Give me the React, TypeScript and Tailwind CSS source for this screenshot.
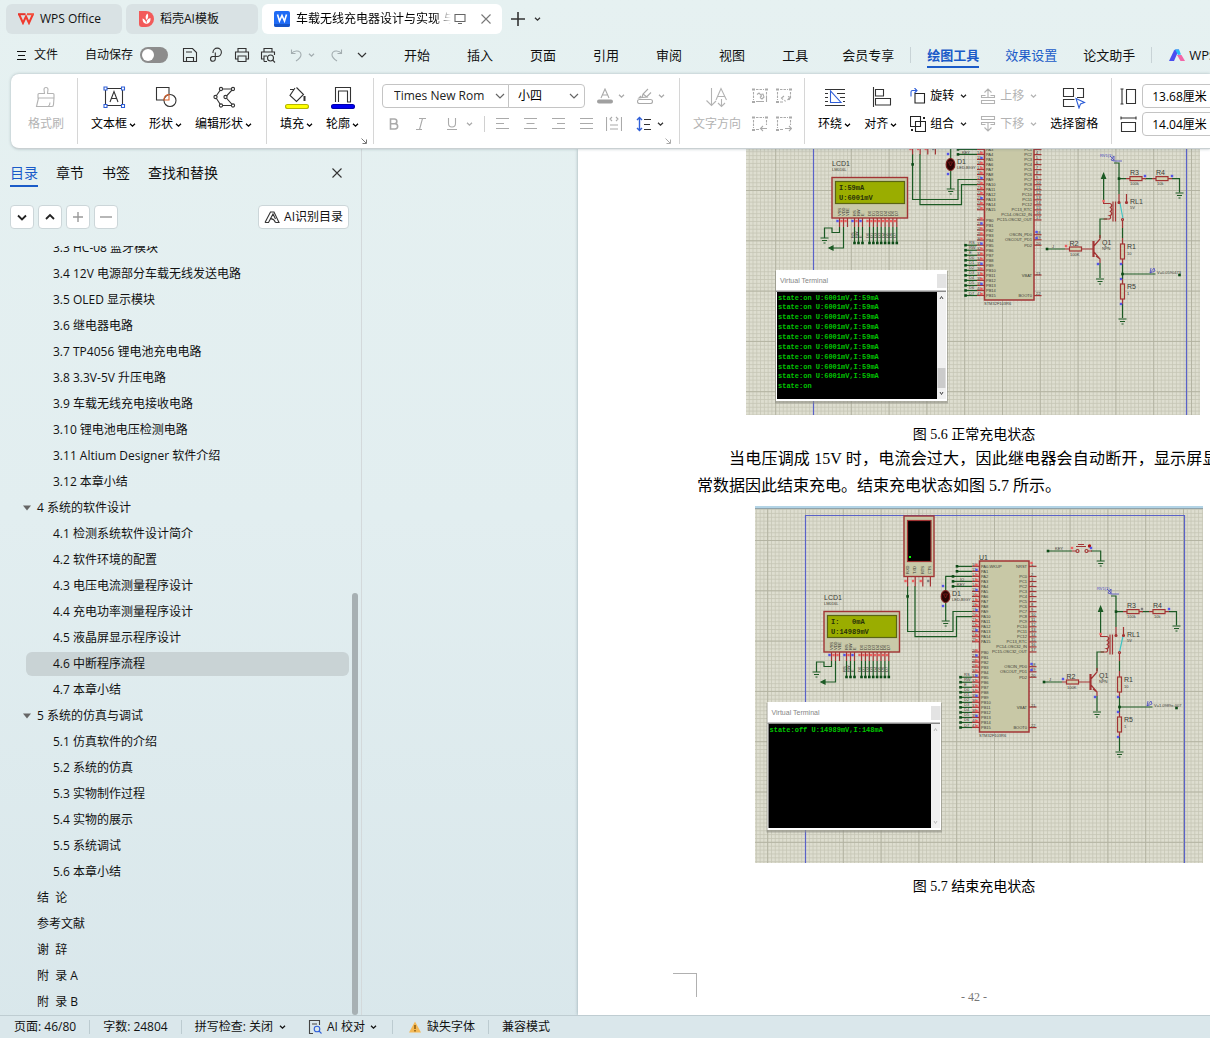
import type { ReactNode } from 'react';
import clsx from 'clsx';

const outline = [
  { level: 2, text: '3.3 HC-08 蓝牙模块' },
  { level: 2, text: '3.4 12V 电源部分车载无线发送电路' },
  { level: 2, text: '3.5 OLED 显示模块' },
  { level: 2, text: '3.6 继电器电路' },
  { level: 2, text: '3.7 TP4056 锂电池充电电路' },
  { level: 2, text: '3.8 3.3V-5V 升压电路' },
  { level: 2, text: '3.9 车载无线充电接收电路' },
  { level: 2, text: '3.10 锂电池电压检测电路' },
  { level: 2, text: '3.11 Altium Designer 软件介绍' },
  { level: 2, text: '3.12 本章小结' },
  { level: 1, text: '4 系统的软件设计', open: true },
  { level: 2, text: '4.1 检测系统软件设计简介' },
  { level: 2, text: '4.2 软件环境的配置' },
  { level: 2, text: '4.3 电压电流测量程序设计' },
  { level: 2, text: '4.4 充电功率测量程序设计' },
  { level: 2, text: '4.5 液晶屏显示程序设计' },
  { level: 2, text: '4.6 中断程序流程', active: true },
  { level: 2, text: '4.7 本章小结' },
  { level: 1, text: '5 系统的仿真与调试', open: true },
  { level: 2, text: '5.1 仿真软件的介绍' },
  { level: 2, text: '5.2 系统的仿真' },
  { level: 2, text: '5.3 实物制作过程' },
  { level: 2, text: '5.4 实物的展示' },
  { level: 2, text: '5.5 系统调试' },
  { level: 2, text: '5.6 本章小结' },
  { level: 1, text: '结  论' },
  { level: 1, text: '参考文献' },
  { level: 1, text: '谢  辞' },
  { level: 1, text: '附  录 A' },
  { level: 1, text: '附  录 B' },
];

/* ---------- icons ---------- */

const Icon = ({ size = 24, className, children }: { size?: number; className?: string; children: ReactNode }) => (
  <svg
    width={size}
    height={size}
    viewBox={`0 0 ${size} ${size}`}
    fill="none"
    stroke="currentColor"
    strokeWidth="1.1"
    className={clsx('shrink-0', className)}
    aria-hidden="true"
  >
    {children}
  </svg>
);

const Chevron = ({ className }: { className?: string }) => (
  <svg width="7" height="6" viewBox="0 0 7 6" fill="none" stroke="currentColor" strokeWidth="1.3" className={clsx('shrink-0', className)} aria-hidden="true">
    <path d="M1 1.7 3.5 4.2 6 1.7" />
  </svg>
);

const WideChevron = ({ className }: { className?: string }) => (
  <svg width="10" height="6" viewBox="0 0 10 6" fill="none" stroke="currentColor" strokeWidth="1.2" className={clsx('shrink-0', className)} aria-hidden="true">
    <path d="M1 1 5 5 9 1" />
  </svg>
);

const Launcher = () => (
  <svg width="6" height="6" viewBox="0 0 6 6" fill="none" stroke="currentColor" strokeWidth="1" aria-hidden="true">
    <path d="M.5.5 5 5M5.5 1.5v4h-4" />
  </svg>
);

const WpsLogo = () => (
  <svg width="16" height="12" viewBox="0 0 16 12" fill="none" strokeWidth="2" aria-hidden="true">
    <path d="M0 1.2h7.5" stroke="#e5342c" />
    <path d="M1.2 1.5 5 10 8 3.5 11 10 14.8 1.5" stroke="#f03a2e" />
    <path d="M9 1.2h7" stroke="#f4523c" />
  </svg>
);

const DocerLogo = () => (
  <svg width="15" height="16" viewBox="0 0 15 16" aria-hidden="true">
    <path d="M0 0h7a8 8 0 0 1 0 16H3a3 3 0 0 1-3-3z" fill="#f25a5a" />
    <path d="M7.5 13C4.5 12.5 3.5 10.5 3.5 7.5 5.5 8 7 9.5 7.5 13zM7.5 13c-.3-3 1-5.5 4-6 .3 3-1 5.5-4 6zM7.5 9C6 6.5 6.5 4 8.5 2.5 9.5 4.5 9.5 7 7.5 9z" fill="#fff" />
  </svg>
);

const WriterLogo = () => (
  <svg width="16" height="16" viewBox="0 0 16 16" aria-hidden="true">
    <rect width="16" height="16" rx="2" fill="#1f6bf5" />
    <path d="M0 13h16v1a2 2 0 0 1-2 2H2a2 2 0 0 1-2-2z" fill="#1553c7" />
    <path d="M3.5 3.5 5.5 10 8 4.5 10.5 10 12.5 3.5" fill="none" stroke="#fff" strokeWidth="1.6" />
  </svg>
);

const AiLogo = () => (
  <svg width="16" height="13" viewBox="0 0 16 13" aria-hidden="true">
    <path d="M0 12 5 1.5Q5.5.5 7 .5h3L5 12z" fill="#4a4df0" />
    <path d="M6 .5h4l2 5-3 .5z" fill="#27b8f5" />
    <path d="M8 6h4.5L16 12h-4.5z" fill="#f266a8" />
  </svg>
);

const IconSave = () => (
  <Icon size={16}>
    <path d="M1.5 14.5v-13h9l4 4v9h-3v-4h-7v4zM4 5h6M4.5 14.5h7" />
  </Icon>
);
const IconExport = () => (
  <Icon size={16}>
    <path d="M5 6V5.2a4.2 4.2 0 1 1 4.2 4.3H4.5a2.4 2.4 0 1 0 2.8 2.500V5.5" />
  </Icon>
);
const IconPrint = () => (
  <Icon size={16}>
    <path d="M4 5V1.5h8V5M3.5 12h-2V5h13v7h-2M4 9h8v5.5H4z" />
  </Icon>
);
const IconPreview = () => (
  <Icon size={16}>
    <path d="M4 5V1.5h8V5M3.5 12h-2V5h13v3M4 14.5V9h3M4 14.5h3" />
    <circle cx="10.5" cy="11" r="3" />
    <path d="m12.7 13.2 2.3 2.3" />
  </Icon>
);
const IconUndo = () => (
  <Icon size={16}>
    <path d="M3.5 2.5v4h4M3.5 6.5C6 3 12.5 3 13 7.5c.2 2.5-2 4.5-5 6.5" />
  </Icon>
);
const IconRedo = () => (
  <Icon size={16}>
    <path d="M12.5 2.5v4h-4M12.5 6.5C10 3 3.5 3 3 7.5c-.2 2.5 2 4.5 5 6.5" />
  </Icon>
);

const IconBrush = () => (
  <Icon>
    <path d="m10.5 8.5-.5-4a2 2 0 0 1 4 0l-.5 4H19q1 0 1 1V13H4V9.5q0-1 1-1zM4.5 13l-2 8.5H18q1.5 0 1.5-2L20 13M14 21.5q2-1 2-4" />
  </Icon>
);
const IconTextBox = () => (
  <Icon>
    <path d="M5 3.5h14M5 20.5h14M3.5 5v14M20.5 5v14" />
    <path d="m8 17 4-10.5L16 17M9.5 13.5h5" />
    <path stroke="#2f5fd8" fill="#fff" d="M2 2h3v3H2zM19.5 2h3v3h-3zM2 19.5h3v3H2zM19.5 19.5h3v3h-3z" />
  </Icon>
);
const IconShapes = () => (
  <Icon>
    <path d="M10 15H2.5V2.5H15V9" />
    <circle cx="16" cy="15.5" r="6" />
    <path stroke="#d9622b" d="M15 9.5V15h-5q0-5 5-5.5z" />
  </Icon>
);
const IconEditShape = () => (
  <Icon>
    <path d="M9 4h12l-7.5 8 7.5 8.5H9L3.5 12z" />
    <g fill="#fff">
      <circle cx="9" cy="4" r="1.6" />
      <circle cx="21" cy="4" r="1.6" />
      <circle cx="13.5" cy="12" r="1.6" />
      <circle cx="3.5" cy="12" r="1.6" />
      <circle cx="9" cy="20.5" r="1.6" />
      <circle cx="21" cy="20.5" r="1.6" />
    </g>
  </Icon>
);
const IconFill = () => (
  <Icon>
    <path d="M5 4.5h4M11.5 2.5l7 7-7 7-6.5-6 5-7.5" />
    <path d="M19.5 11v5" strokeWidth="2" />
    <rect x=".5" y="19.5" width="23" height="4" rx="2" fill="#ffff00" stroke="#b5b500" />
  </Icon>
);
const IconOutline = () => (
  <Icon>
    <path d="M4.5 17V2.5h15V17h-3V6h-9v11" />
    <rect x=".5" y="19.5" width="23" height="4" rx="2" fill="#0000f0" stroke="#0000b0" />
  </Icon>
);
const IconTextDir = () => (
  <Icon>
    <path d="M6.5 3v17.5M1.5 15.5l5 5 4.5-4.5M11 15l5-11.5L21.5 15M13 11.5h6.5M16.5 14v7M13 18l3.5 3.5L20 18" />
  </Icon>
);
const IconWrap = () => (
  <Icon>
    <path d="M2 4.5h20M2 20.5h20M2 8.5h3M2 12.5h3M2 16.5h3M14 8.5h8M17 12.5h5M20 16.5h2" />
    <path stroke="#2f5fd8" d="M7.5 6v11.5H18z" />
  </Icon>
);
const IconAlign = () => (
  <Icon>
    <path d="M4.5 2v20M6.5 4.5h8V11h-8zM6.5 13.5h15V20h-15z" />
  </Icon>
);
const IconPane = () => (
  <Icon>
    <path d="M1.5 3.5h10v8h-10zM15 3.5h6.5v9H15M12.500 14.5h-11v7h11" />
    <path stroke="#2f5fd8" fill="#fff" d="m14 13.5 8.5 4-4 1.5-1.5 4z" />
  </Icon>
);
const IconRotate = () => (
  <Icon size={16}>
    <path d="M5 5.5h9.5V15H5z" />
    <path stroke="#2f5fd8" d="M1 8.5V4q0-1.5 1.5-1.5H7M4.5 0 7 2.5 4.5 5" />
  </Icon>
);
const IconGroup = () => (
  <Icon size={16}>
    <path d="M.5.5h10v10H.5zM5.5 5.5h10v10h-10z" />
    <path d="M13 1h2v2h-2zM1 13h2v2H1z" fill="currentColor" stroke="none" />
  </Icon>
);
const IconForward = () => (
  <Icon size={16}>
    <path d="M1.5 12.5h13v3h-13zM5.5 7.5h-4v2h13v-2h-4M8 9.5V1M4.5 4.5 8 1l3.5 3.5" />
  </Icon>
);
const IconBackward = () => (
  <Icon size={16}>
    <path d="M1.5.5h13v3h-13zM5.5 8.5h-4v-2h13v2h-4M8 6.5V15M4.5 11.5 8 15l3.5-3.5" />
  </Icon>
);

const LinkBox = ({ kind }: { kind: 'link' | 'unlink' | 'prev' | 'next' }) => (
  <Icon size={16}>
    <path d="M1.5 4v8M14.5 4v5M4 1.5h8" strokeDasharray="2.5 1" />
    <path d="M0 .5h3v2H0zM13 .5h3v2h-3zM0 13h3v2H0z" fill="currentColor" stroke="none" />
    {kind === 'link' && <path d="M4 13.5h8M14.5 9v5M5 6.5 7 5l2.5 3L8 9.5M8 6.5l3-.5 1 3-2 2-2-1.5" />}
    {kind === 'unlink' && <path d="M4 14h3M7 11.5 5.5 10 8 8M12 8.5l2.5 1L13 12M8.5 12l1 1.5M11.5 12l2-2" />}
    {kind === 'prev' && <path d="M4 13.5h3M15 12.5H9M11 10l-2.5 2.5L11 15" />}
    {kind === 'next' && <path d="M4 13.5h3M9 12.5h6M13 10l2.5 2.5L13 15" />}
  </Icon>
);

/* ---------- ribbon pieces ---------- */

const Divider = () => <div className="my-1 w-px shrink-0 bg-[#d6d6d6]" />;

const BigButton = ({ icon, label, menu = true, disabled }: { icon: ReactNode; label: string; menu?: boolean; disabled?: boolean }) => (
  <button type="button" disabled={disabled} className={clsx('flex shrink-0 flex-col items-center pt-[11px]', disabled ? 'text-[#b3b3b3]' : 'text-[#333]')}>
    {icon}
    <span className={clsx('mt-[5px] flex h-5 items-center gap-0.5', !disabled && 'text-black')}>
      {label}
      {menu && <Chevron className="mt-0.5" />}
    </span>
  </button>
);

const SmallButton = ({ icon, label, disabled }: { icon: ReactNode; label: string; disabled?: boolean }) => (
  <button type="button" disabled={disabled} className={clsx('flex h-6 items-center', disabled ? 'text-[#b3b3b3]' : 'text-[#222]')}>
    {icon}
    <span className={clsx('mr-1.5 ml-1', !disabled && 'text-black')}>{label}</span>
    <Chevron />
  </button>
);

const alignIcons = [
  { name: '左对齐', d: 'M1 2.5h13M1 7.5h8M1 12.5h13' },
  { name: '居中', d: 'M1 2.5h13M3.5 7.5h8M1 12.5h13' },
  { name: '右对齐', d: 'M1 2.5h13M6 7.5h8M1 12.5h13' },
  { name: '两端对齐', d: 'M1 2.5h13M1 7.5h13M1 12.5h13' },
];

/* ---------- circuit drawing ---------- */

const WIRE = '#1c5a24';
const PART = '#a23434';
const INK = '#3b3b34';

const Ground = ({ x, y }: { x: number; y: number }) => (
  <path d={`M${x - 4} ${y}h8M${x - 2.5} ${y + 2.5}h5M${x - 1} ${y + 5}h2`} stroke={WIRE} />
);

const Dot = ({ x, y }: { x: number; y: number }) => <rect x={x - 1.3} y={y - 1.3} width="2.6" height="2.6" fill="#0c4a16" stroke="none" />;

const Probe = ({ x, y, color = '#5656e8' }: { x: number; y: number; color?: string }) => (
  <rect x={x - 1.2} y={y - 1.2} width="2.4" height="2.4" fill={color} stroke="none" />
);

const Label = ({ x, y, size = 7, end, children }: { x: number; y: number; size?: number; end?: boolean; children: ReactNode }) => (
  <text x={x} y={y} fontSize={size} fill={INK} stroke="none" textAnchor={end ? 'end' : 'start'}>
    {children}
  </text>
);

const Resistor = ({ x, y, vertical }: { x: number; y: number; vertical?: boolean }) => (
  <rect x={x} y={y} width={vertical ? 4 : 12} height={vertical ? 15 : 4} fill="#d0cfb0" stroke={PART} />
);

const Display = ({ lines }: { lines: string[] }) => (
  <g stroke={WIRE}>
    <rect x="824" y="611.5" width="75.5" height="40.5" fill="#c9c9a9" stroke={PART} strokeWidth="1.4" />
    <rect x="827.5" y="615.5" width="69" height="22" fill="#9aad00" stroke="#5a6414" />
    {lines.map((line, i) => (
      <text key={i} x="831" y={624 + i * 10} fontSize="7" fontWeight="bold" fill="#28300a" stroke="none" xmlSpace="preserve" className="font-['Liberation_Mono',monospace] whitespace-pre">
        {line}
      </text>
    ))}
    {['VSS', 'VDD', 'VEE', 'RS', 'RW', 'E', 'D0', 'D1', 'D2', 'D3', 'D4', 'D5', 'D6', 'D7'].map((pin, i) => {
      const x = i < 3 ? 831.5 + i * 4 : i < 6 ? 846.5 + (i - 3) * 4 : 861.5 + (i - 6) * 3.9;
      return (
        <g key={pin}>
          <text transform={`translate(${x + 1.5} 650) rotate(-90)`} fontSize="4" fill={INK} stroke="none">
            {pin}
          </text>
          <path d={`M${x} 652v9`} stroke={PART} />
          <Probe x={x - 2} y={655} color={i === 0 || i === 3 || i === 5 ? '#5656e8' : '#f06060'} />
          {i > 2 && <path d={`M${x} 661v16`} />}
          {i > 2 && <Dot x={x} y={677} />}
          {i > 2 && (
            <text transform={`translate(${x - 0.5} 672) rotate(-90)`} fontSize="4" fill={INK} stroke="none">
              {pin}
            </text>
          )}
        </g>
      );
    })}
    <path d="M831.5 661v5.5H824V662h-7.5v10M835.5 661v21H824" />
    <path d="m821 682 4-2v4z" fill={WIRE} />
    <Ground x={816.5} y={672} />
    <Label x={824} y={600}>LCD1</Label>
    <Label x={824} y={605} size={4}>LM016L</Label>
  </g>
);

const leftPins = [
  ...Array.from({ length: 16 }, (_, i) => ({ name: i === 0 ? 'PA0-WKUP' : `PA${i}`, y: 566.3 + i * 5.03 })),
  ...Array.from({ length: 16 }, (_, i) => ({ name: `PB${i}`, y: 652 + i * 5.03 })),
];

const rightPins = [
  { name: 'NRST', y: 566.3 },
  ...Array.from({ length: 16 }, (_, i) => ({
    name: ['PC13_RTC', 'PC14-OSC32_IN', 'PC15-OSC32_OUT'][i - 13] ?? `PC${i}`,
    y: 576.5 + i * 5.03,
  })),
  { name: 'OSCIN_PD0', y: 666.7 },
  { name: 'OSCOUT_PD1', y: 671.8 },
  { name: 'PD2', y: 677.2 },
  { name: 'VBAT', y: 707 },
  { name: 'BOOT0', y: 727.6 },
];

const busNames = ['RS', 'RW', 'E', 'D0', 'D1', 'D2', 'D3', 'D4', 'D5', 'D6', 'D7'];

const Mcu = () => (
  <g stroke={WIRE}>
    <rect x="979.5" y="561" width="49.5" height="171" fill="#c8c8a6" stroke={PART} strokeWidth="1.5" />
    {leftPins.map((pin, i) => (
      <g key={pin.name}>
        <path d={`M972 ${pin.y}h7.5`} stroke={PART} />
        <Label x={981} y={pin.y + 1.5} size={4}>{pin.name}</Label>
        <Label x={972} y={pin.y - 0.5} size={4}>{10 + i}</Label>
        <Probe x={976.5} y={pin.y - 1.5} color={i % 4 === 1 ? '#5656e8' : '#f06060'} />
      </g>
    ))}
    {rightPins.map((pin, i) => (
      <g key={pin.name}>
        <path d={`M1029 ${pin.y}h7.5`} stroke={PART} />
        <Label x={1027} y={pin.y + 1.5} size={4} end>{pin.name}</Label>
        <Label x={1031} y={pin.y - 0.5} size={4}>{i + 1}</Label>
      </g>
    ))}
    <Probe x={1031.5} y={563} color="#f06060" />
    <Probe x={1031.5} y={664} />
    <Probe x={1031.5} y={670} />
    {busNames.map((name, i) => (
      <g key={name}>
        <path d={`M961 ${677.2 + i * 5.03}h11`} />
        <Dot x={960.5} y={677.2 + i * 5.03} />
        <Label x={964} y={676.2 + i * 5.03} size={4}>{name}</Label>
      </g>
    ))}
    <path d="M957 566.3h15M957 571.3h15M953 581.4h19M953 586.4h19M945.7 590v-13.6H972M945.7 603v18" />
    <Dot x={957} y={566.3} />
    <Dot x={957} y={571.3} />
    <Dot x={953} y={576.4} />
    <Dot x={953} y={581.4} />
    <Dot x={953} y={586.4} />
    <path d="M907.6 586v45.5H953v-20h19M915 586v50.7h41.5v-20H972" />
    <Dot x={907.6} y={596.4} />
    <ellipse cx="945.5" cy="596.5" rx="4.3" ry="6" fill="#2a0505" stroke="#7a1c1c" />
    <path d="M943.5 594h4l-2 4z" stroke="#a02020" strokeWidth=".6" />
    <Probe x={943} y={586} />
    <Probe x={943} y={606} />
    <Ground x={945.7} y={621} />
    <Label x={952} y={596}>D1</Label>
    <Label x={952} y={601} size={4}>LED-BIGY</Label>
    <Label x={960} y={580.5} size={4}>IO</Label>
    <Label x={957} y={585.5} size={4}>KEY</Label>
    <Label x={979} y={560}>U1</Label>
    <Label x={979} y={737} size={4}>STM32F103R6</Label>
    {/* serial terminal block */}
    <rect x="904" y="516" width="30" height="60.5" fill="#c9c9a9" stroke={PART} strokeWidth="1.4" />
    <rect x="907.5" y="520.5" width="23.5" height="41" fill="#000" stroke={PART} />
    <rect x="909" y="556" width="2" height="2" fill="#0f0" stroke="none" />
    {['RXD', 'TXD', 'RTS', 'CTS'].map((pin, i) => (
      <g key={pin}>
        <path d={`M${907.6 + i * 7.6} 576.5v10`} stroke={PART} />
        <Probe x={905.5 + i * 7.6} y={581} color={i < 3 ? '#f06060' : '#808080'} />
        <text transform={`translate(${909 + i * 7.4} 574) rotate(-90)`} fontSize="4" fill={INK} stroke="none">
          {pin}
        </text>
      </g>
    ))}
  </g>
);

const PushButton = () => (
  <g stroke={WIRE}>
    <path d="M1048 551h24M1091 551h9.7v10" />
    <Dot x={1048} y={551} />
    <path d="M1072 551h4M1088 551h4M1076 546.5h10M1078 544.5h6" stroke={PART} />
    <circle cx="1077.5" cy="551" r="1.5" stroke={PART} />
    <circle cx="1086.5" cy="551" r="1.5" stroke={PART} />
    <circle cx="1089.5" cy="546" r="1.7" fill="#b01515" stroke="none" />
    <Probe x={1072} y={548} color="#f06060" />
    <Probe x={1091} y={548} />
    <Label x={1055} y={550} size={4}>KEY</Label>
    <Ground x={1100.7} y={561} />
  </g>
);

const PowerStage = ({ closed, reading }: { closed: boolean; reading: string }) => (
  <g stroke={WIRE}>
    {/* divider on the supply rail */}
    <path d="M1111 596h5v31M1116 611.6h7M1142 611.6h7M1169 611.6h7.5v14" />
    <path d="m1107 589 4 4M1108 593l3-4v5zM1111 594h8" stroke="#4a4ac0" strokeWidth=".8" />
    <text x="1097" y="590" fontSize="4" fill="#4a4ac0" stroke="none">RV1(1)</text>
    <Dot x={1116} y={611.6} />
    <path d="M1123 611.6h4M1139 611.6h4M1149 611.6h4M1165 611.6h4" stroke={PART} />
    <Resistor x={1127} y={609.6} />
    <Resistor x={1153} y={609.6} />
    <Probe x={1169} y={609} />
    <Probe x={1142} y={609} color={closed ? '#5656e8' : '#808080'} />
    <Label x={1127} y={608}>R3</Label>
    <Label x={1153} y={608}>R4</Label>
    <Label x={1127} y={618} size={4}>100k</Label>
    <Label x={1154} y={618} size={4}>10k</Label>
    <Ground x={1176.5} y={626} />

    {/* relay */}
    <path d="M1100.6 611v22M1097 671v-19h7" />
    <path d="m1100.6 606.5-2 5h4z" fill={WIRE} />
    <path d="M1100.6 634v2.5h6a2 2 0 0 1 0 4 2 2 0 0 1 0 4 2 2 0 0 1 0 4 2 2 0 0 1 0 3.5h-6M1110 634.5v20M1112.5 634.5v20M1116 627v9M1123.5 627v9" stroke={PART} />
    <path d={closed ? 'M1117 636l3 16' : 'M1123 636l-3.5 16'} stroke="#3fc4c4" />
    <circle cx="1116" cy="635.5" r="1" fill={PART} stroke={PART} />
    <circle cx="1123.5" cy="635.5" r="1" fill={PART} stroke={PART} />
    <circle cx="1119.5" cy="652.5" r="1" stroke={PART} />
    <Probe x={1100.6} y={634} color="#f06060" />
    <Label x={1127} y={637}>RL1</Label>
    <Label x={1127} y={642} size={4}>5V</Label>

    {/* sense chain */}
    <path d="M1119.5 653v8M1119.5 671v6M1119.5 692v5M1119.5 712v5M1119.5 732v5" stroke={PART} />
    <path d="M1119.5 661v10M1119.5 697v15M1119.5 737v14M1119.5 707h33" />
    <Resistor x={1117.5} y={677} vertical />
    <Resistor x={1117.5} y={717} vertical />
    <Dot x={1119.5} y={707} />
    <Dot x={1176.5} y={708} />
    <Probe x={1118} y={697} />
    <Probe x={1118} y={712} />
    <Probe x={1118} y={737} />
    <path d="m1147 706 4-5 1 3zM1147 706l1-5" stroke="#4a4ac0" strokeWidth=".8" />
    <Label x={1154} y={706.5} size={4}>{reading}</Label>
    <Label x={1124} y={682}>R1</Label>
    <Label x={1124} y={688} size={4}>10</Label>
    <Label x={1124} y={722}>R5</Label>
    <Label x={1124} y={728} size={4}>1</Label>
    <Ground x={1119.5} y={752} />

    {/* driver transistor */}
    <path d="M1044 682h18M1097 696v15" />
    <Dot x={1044} y={682} />
    <path d="M1062 682h4.5M1078.5 682h11M1090 674v16M1091 674v16M1091 679l6-7v-4M1091 685l6 7v4M1093 689l4 3" stroke={PART} />
    <Resistor x={1066.5} y={680} />
    <Probe x={1063} y={679} color={closed ? '#f06060' : '#5656e8'} />
    <Probe x={1095} y={697} />
    <Label x={1066.5} y={679}>R2</Label>
    <Label x={1067} y={689} size={4}>100K</Label>
    <Label x={1049} y={681} size={4}>J</Label>
    <Label x={1099} y={678}>Q1</Label>
    <Label x={1099} y={683} size={4}>NPN</Label>
    <Ground x={1097} y={712} />
  </g>
);

const TerminalWindow = ({ x, y, width, height, lines, thumb }: { x: number; y: number; width: number; height: number; lines: string[]; thumb?: boolean }) => (
  <g>
    <rect x={x - 1} y={y + 1} width={width + 2} height={height + 1.5} fill="#8d8d84" opacity=".6" />
    <rect x={x} y={y} width={width} height={height} fill="#fff" />
    <rect x={x + width - 10} y={y + 4} width="9.5" height="14" fill="#e3e3e3" />
    <text x={x + 4} y={y + 13} fontSize="7" fill="#858585">
      Virtual Terminal
    </text>
    <rect x={x} y={y + 20.5} width={width - 1} height="1.5" fill="#8a8a8a" />
    <rect x={x + 1} y={y + 22} width={width - 11} height={height - 24} fill="#000" />
    <rect x={x + width - 10} y={y + 22} width="9" height={height - 24} fill="#f0f0f0" />
    {thumb && <rect x={x + width - 9.5} y={y + 98} width="8" height="20" fill="#cbcbcb" />}
    <path d={`M${x + width - 7} ${y + 29}l1.5-2.5 1.5 2.5M${x + width - 7} ${y + height - 9}l1.5 2.5 1.5-2.5`} fill="none" stroke={thumb ? '#444' : '#bbb'} strokeWidth="1" />
    {lines.map((line, i) => (
      <text key={i} x={x + 2} y={y + 29.5 + i * 9.87} fontSize="7" fontWeight="bold" fill="#00c400" className="font-['Liberation_Mono',monospace]">
        {line}
      </text>
    ))}
  </g>
);

const Grid = ({ id, x, y, width, height }: { id: string; x: number; y: number; width: number; height: number }) => (
  <>
    <defs>
      <pattern id={`${id}-minor`} x={x} y={y} width="3.78" height="3.87" patternUnits="userSpaceOnUse">
        <path d="M0 .5h4M.5 0v4" stroke="#c6c6b4" strokeWidth=".8" />
      </pattern>
      <pattern id={`${id}-major`} x={x} y={y} width="37.8" height="50.3" patternUnits="userSpaceOnUse">
        <path d="M0 .5h38M.5 0v51" stroke="#b2b2a0" strokeWidth=".9" />
      </pattern>
    </defs>
    <rect x={x - 100} y={y - 100} width={width} height={height} fill="#deded0" />
    <rect x={x - 100} y={y - 100} width={width} height={height} fill={`url(#${id}-minor)`} />
    <rect x={x - 100} y={y - 100} width={width} height={height} fill={`url(#${id}-major)`} />
  </>
);

const chargingLog = [...Array(9).fill('state:on U:6001mV,I:59mA'), 'state:on'];

const ChargingFigure = () => (
  <svg width="454" height="266" viewBox="746 149 454 266" fill="none" strokeWidth="1.2" role="img" aria-label="正常充电状态" className="block font-['Liberation_Sans',sans-serif]">
    <Grid id="charging" x={813} y={190} width={600} height={400} />
    <path d="M813.5 149v266M1186.5 149v266" stroke="#5a62c8" />
    <g transform="translate(8 -434)">
      <Display lines={['I:59mA', 'U:6001mV']} />
    </g>
    <g transform="translate(5 -432)">
      <Mcu />
    </g>
    <g transform="translate(3 -433)">
      <PowerStage closed reading="V=0.0590473" />
    </g>
    <TerminalWindow x={776} y={270} width={171} height={131} lines={chargingLog} thumb />
  </svg>
);

const StoppedFigure = () => (
  <svg width="448" height="357" viewBox="755 506 448 357" fill="none" strokeWidth="1.2" role="img" aria-label="结束充电状态" className="block font-['Liberation_Sans',sans-serif]">
    <Grid id="stopped" x={805} y={540} width={600} height={500} />
    <rect x="755" y="506" width="448" height="2" fill="#b3d4e6" />
    <path d="M755 508.5h448" stroke="#8fa3ab" />
    <path d="M805.5 863V515.5h379V863" stroke="#5a62c8" />
    <Display lines={['I:   0mA', 'U:14989mV']} />
    <Mcu />
    <PushButton />
    <PowerStage closed={false} reading="V=1.0989e-007" />
    <TerminalWindow x={767.5} y={702} width={173.5} height={128} lines={['state:off U:14989mV,I:148mA']} />
  </svg>
);

/* ---------- layout ---------- */

const TitleTabs = () => (
  <div className="flex h-[38px] shrink-0 items-center pl-1.5">
    <button type="button" className="flex h-[30px] w-[116px] items-center gap-1.5 rounded-md bg-[#d9e2e4] pl-3">
      <WpsLogo />
      WPS Office
    </button>
    <button type="button" className="ml-1 flex h-[30px] w-[132px] items-center gap-1.5 rounded-md bg-[#d9e2e4] pl-[13px]">
      <DocerLogo />
      稻壳AI模板
    </button>
    <div className="ml-1 flex h-[30px] w-60 items-center rounded-md bg-white pl-3">
      <WriterLogo />
      <span className="ml-1.5 w-[155px] overflow-hidden bg-linear-to-r from-black from-90% to-transparent bg-clip-text whitespace-nowrap text-transparent">
        车载无线充电器设计与实现 与
      </span>
      <Icon size={12} className="ml-[3px] text-[#666]">
        <path d="M1 1.5h10v7H1zM4 10.5h4" />
      </Icon>
      <button type="button" aria-label="关闭标签" className="ml-[15px] text-[#777]">
        <Icon size={10}>
          <path d="m.5.5 9 9m0-9-9 9" />
        </Icon>
      </button>
    </div>
    <button type="button" aria-label="新建标签" className="ml-[9px] text-[#333]">
      <Icon size={14}>
        <path d="M7 0v14M0 7h14" strokeWidth="1.6" />
      </Icon>
    </button>
    <button type="button" aria-label="标签列表" className="ml-[9px] text-[#333]">
      <Chevron />
    </button>
  </div>
);

const menuTabs = ['开始', '插入', '页面', '引用', '审阅', '视图', '工具'];

const MenuBar = () => (
  <div className="flex h-9 shrink-0 items-center overflow-hidden pb-0.5 pl-[17px] whitespace-nowrap">
    <button type="button" className="flex items-center gap-2">
      <Icon size={9}>
        <path d="M0 .5h9M1 4.5h7M0 8.5h9" />
      </Icon>
      文件
    </button>
    <div className="ml-3 h-4 w-px bg-[#c8d3d6]" />
    <label className="ml-[15px] flex items-center gap-[7px]">
      自动保存
      <input
        type="checkbox"
        role="switch"
        className="h-4 w-7 appearance-none rounded-full bg-[#8c8c8c] p-0.5 before:block before:size-3 before:rounded-full before:bg-white"
      />
    </label>
    <div className="ml-3.5 flex items-center gap-2.5 text-[#333]">
      <button type="button" aria-label="保存"><IconSave /></button>
      <button type="button" aria-label="输出为PDF"><IconExport /></button>
      <button type="button" aria-label="打印"><IconPrint /></button>
      <button type="button" aria-label="打印预览"><IconPreview /></button>
      <button type="button" aria-label="撤销" className="ml-0.5 flex items-center gap-1 text-[#a3adb0]">
        <IconUndo />
        <Chevron />
      </button>
      <button type="button" aria-label="恢复" className="ml-1 text-[#a3adb0]"><IconRedo /></button>
      <button type="button" aria-label="自定义快速访问工具栏" className="ml-0.5"><WideChevron /></button>
    </div>
    <div className="ml-4 h-4 w-px bg-[#c8d3d6]" />
    <nav className="flex items-center text-[13px]">
      <div className="ml-[21px] flex gap-[37px]">
        {menuTabs.map((tab) => (
          <button key={tab} type="button">{tab}</button>
        ))}
      </div>
      <button type="button" className="ml-[34px]">会员专享</button>
      <div className="ml-4 h-4 w-px bg-[#c8d3d6]" />
      <button type="button" className="mt-[5px] ml-4 border-b-2 border-[#1a5bc8] pb-[3px] font-bold text-[#1a5bc8]">绘图工具</button>
      <button type="button" className="ml-[26px] text-[#1a5bc8]">效果设置</button>
      <button type="button" className="ml-[26px]">论文助手</button>
      <div className="ml-4 h-4 w-px bg-[#c8d3d6]" />
      <button type="button" className="ml-[17px] flex items-center gap-1">
        <AiLogo />
        WPS AI
      </button>
    </nav>
  </div>
);

const FontGroup = () => (
  <div className="relative flex w-[305px] shrink-0 flex-col gap-1 pt-2.5 pl-2 text-[#aaa]">
    <div className="flex h-6 items-center">
      <div className="relative w-[127px]">
        <select aria-label="字体" className="h-6 w-full appearance-none rounded-l border border-[#c4c4c4] pr-[22px] pl-[11px] text-[#222]">
          <option>Times New Rom</option>
        </select>
        <WideChevron className="absolute top-[9px] right-1 text-[#666]" />
      </div>
      <div className="relative -ml-px w-[77px]">
        <select aria-label="字号" className="h-6 w-full appearance-none rounded-r border border-[#c4c4c4] pl-[9px] text-black">
          <option>小四</option>
        </select>
        <WideChevron className="absolute top-[9px] right-1.5 text-[#666]" />
      </div>
      <button type="button" disabled aria-label="字体颜色" className="ml-3 flex items-center gap-[5px]">
        <Icon size={16}>
          <path d="M4 10 8 1l4 9M5.5 7h5" />
          <rect y="11.5" width="16" height="4" rx="2" fill="#a0a0a0" stroke="none" />
        </Icon>
        <Chevron />
      </button>
      <button type="button" disabled aria-label="突出显示" className="ml-3 flex items-center gap-[5px]">
        <Icon size={16}>
          <path d="M5 9.5 6 6l5-5M9.5 9 14 4.5M6 6l4 3-5 .5-3 .5 2-2" />
          <rect x=".5" y="11.5" width="15" height="4" rx="2" />
        </Icon>
        <Chevron />
      </button>
    </div>
    <div className="flex h-6 items-center">
      <button type="button" disabled aria-label="加粗" className="flex w-6 justify-center">
        <Icon size={12}>
          <path d="M2.5 1h4a2.3 2.3 0 0 1 0 4.7h-4zM2.5 5.7H7a2.6 2.6 0 0 1 0 5.3H2.5z" strokeWidth="1.6" />
        </Icon>
      </button>
      <button type="button" disabled aria-label="倾斜" className="flex w-[30px] justify-center">
        <Icon size={12}><path d="M4 .5h7M1 11.5h6M7.5.5l-3 11" /></Icon>
      </button>
      <button type="button" disabled aria-label="下划线" className="flex w-[37px] items-center justify-end gap-2">
        <Icon size={12}><path d="M2.5 0v5.5a3.5 3.5 0 0 0 7 0V0M1 11.5h10" /></Icon>
        <Chevron />
      </button>
      <div className="ml-[11px] h-4 w-px bg-[#d0d0d0]" />
      <div className="flex pl-[3px]">
        {alignIcons.map((icon) => (
          <button key={icon.name} type="button" disabled aria-label={icon.name} className="flex w-7 justify-center">
            <Icon size={15}><path d={icon.d} /></Icon>
          </button>
        ))}
        <button type="button" disabled aria-label="分散对齐" className="flex w-7 justify-center">
          <Icon size={16}><path d="M.5 1v14M15.5 1v14M6 1 4 3l2 2M10 1l2 2-2 2M4 9h8M4 13h8" /></Icon>
        </button>
      </div>
      <button type="button" aria-label="行距" className="ml-2 flex items-center gap-[5px] text-[#333]">
        <Icon size={16}>
          <path d="M8 3.5h7M8 8.5h6M8 13.5h7" />
          <path stroke="#2f5fd8" strokeWidth="1.4" d="M3.5 1.5v13M1 4l2.5-2.5L6 4M1 12l2.5 2.5L6 12" />
        </Icon>
        <Chevron />
      </button>
    </div>
    <button type="button" disabled aria-label="字体设置" className="absolute right-2 bottom-1">
      <Launcher />
    </button>
  </div>
);

const Ribbon = () => (
  <div className="z-10 ml-[11px] flex h-[75px] shrink-0 overflow-hidden rounded-l-lg border-b border-[#c9d0d2] bg-white whitespace-nowrap shadow-[0_0_3px_rgba(90,110,120,0.45)]">
    <div className="flex shrink-0 pr-[13px] pl-[17px]">
      <BigButton icon={<IconBrush />} label="格式刷" menu={false} disabled />
    </div>
    <Divider />
    <div className="flex shrink-0 gap-[13px] pr-3.5 pl-[13px]">
      <BigButton icon={<IconTextBox />} label="文本框" />
      <BigButton icon={<IconShapes />} label="形状" />
      <BigButton icon={<IconEditShape />} label="编辑形状" />
    </div>
    <Divider />
    <div className="relative flex shrink-0 gap-[13px] pr-3.5 pl-[13px]">
      <BigButton icon={<IconFill />} label="填充" />
      <BigButton icon={<IconOutline />} label="轮廓" />
      <button type="button" aria-label="形状格式" className="absolute right-1.5 bottom-1 text-[#777]">
        <Launcher />
      </button>
    </div>
    <Divider />
    <FontGroup />
    <Divider />
    <div className="flex shrink-0 gap-[11px] pr-3 pl-[13px]">
      <BigButton icon={<IconTextDir />} label="文字方向" menu={false} disabled />
      <div className="grid w-10 shrink-0 grid-cols-2 content-start gap-x-2 gap-y-3 pt-3.5 text-[#aaa]">
        <button type="button" disabled aria-label="创建文本框链接"><LinkBox kind="link" /></button>
        <button type="button" disabled aria-label="断开文本框链接"><LinkBox kind="unlink" /></button>
        <button type="button" disabled aria-label="前一文本框"><LinkBox kind="prev" /></button>
        <button type="button" disabled aria-label="下一文本框"><LinkBox kind="next" /></button>
      </div>
    </div>
    <Divider />
    <div className="flex shrink-0 gap-[13px] px-[13px]">
      <BigButton icon={<IconWrap />} label="环绕" />
      <BigButton icon={<IconAlign />} label="对齐" />
      <div className="flex flex-col gap-1 pt-2.5">
        <SmallButton icon={<IconRotate />} label="旋转" />
        <SmallButton icon={<IconGroup />} label="组合" />
      </div>
      <div className="flex flex-col gap-1 pt-2.5">
        <SmallButton icon={<IconForward />} label="上移" disabled />
        <SmallButton icon={<IconBackward />} label="下移" disabled />
      </div>
      <BigButton icon={<IconPane />} label="选择窗格" menu={false} />
    </div>
    <Divider />
    <div className="flex shrink-0 flex-col gap-1 pt-2.5 pl-2 text-[#333]">
      <label className="flex items-center gap-[5px]">
        <Icon size={17}><path d="M.5 1h3M.5 16h3M2 1v15M6.5 1.5h9v14h-9z" /></Icon>
        <input aria-label="高度" defaultValue="13.68厘米" className="h-6 w-24 rounded border border-[#c4c4c4] pl-[9px] text-black" />
      </label>
      <label className="flex items-center gap-[5px]">
        <Icon size={17}><path d="M1 .5v3M16 .5v3M1 2h15M1.5 6.5h14v9h-14z" /></Icon>
        <input aria-label="宽度" defaultValue="14.04厘米" className="h-6 w-24 rounded border border-[#c4c4c4] pl-[9px] text-black" />
      </label>
    </div>
  </div>
);

const treeButtons = [
  { name: '展开', d: 'm2 4.5 4 4 4-4', strong: true },
  { name: '收起', d: 'm2 8 4-4 4 4', strong: true },
  { name: '增加', d: 'M6 1v10M1 6h10' },
  { name: '减少', d: 'M0 6h12' },
];

const Sidebar = () => (
  <aside className="relative flex w-[362px] shrink-0 flex-col border-r border-[#d3d9db]">
    <div className="mt-3 flex h-7 items-start gap-[18px] pl-2.5 text-[14px] leading-6">
      <button type="button" className="h-[26px] border-b-2 border-[#1a5bc8] text-[#1a5bc8]">目录</button>
      <button type="button">章节</button>
      <button type="button">书签</button>
      <button type="button">查找和替换</button>
      <button type="button" aria-label="关闭" className="mt-[7px] mr-[19px] ml-auto text-[#333]">
        <Icon size={10}>
          <path d="m.5.5 9 9m0-9-9 9" />
        </Icon>
      </button>
    </div>
    <div className="mt-4 flex gap-1 pr-3 pl-2.5">
      {treeButtons.map((button) => (
        <button
          key={button.name}
          type="button"
          aria-label={button.name}
          className={clsx('flex size-6 items-center justify-center rounded border border-[#ccd6d9] bg-white', button.strong ? 'text-[#222]' : 'text-[#999]')}
        >
          <Icon size={12}>
            <path d={button.d} strokeWidth={button.strong ? 1.8 : 1.4} />
          </Icon>
        </button>
      ))}
      <button type="button" className="ml-auto flex h-6 items-center gap-1 rounded border border-[#ccd6d9] bg-white px-[5px]">
        <Icon size={16} className="text-[#333]">
          <path d="M1 13.5h3.5L9 5l2.5 5M1 13.5 6.5 3H10l5 10.5h-3.5M6.5 10q3-1 5 3.5" />
        </Icon>
        AI识别目录
      </button>
    </div>
    <div className="mt-[17px] min-h-0 flex-1 overflow-hidden">
      <ul className="-mt-2.5">
        {outline.map((item) => (
          <li key={item.text} className="h-[26px] pr-3 pl-[26px]">
            <a
              href="#"
              className={clsx(
                'relative flex h-6 items-center rounded-md whitespace-pre',
                item.level === 1 ? 'pl-[11px]' : 'pl-[27px]',
                item.active && 'bg-[#c9d3d5]',
              )}
            >
              {item.open && (
                <svg width="8" height="6" viewBox="0 0 8 6" className="absolute -left-[3px]" aria-hidden="true">
                  <path d="M0 .5h8L4 5.5z" fill="#666" />
                </svg>
              )}
              {item.text}
            </a>
          </li>
        ))}
      </ul>
    </div>
    <div className="absolute right-[3px] bottom-0 h-[422px] w-1.5 rounded-full bg-[#a7b0b3]" />
  </aside>
);

const Document = () => (
  <main className="min-w-0 flex-1 overflow-hidden pl-[216px] font-['Liberation_Serif','Noto_Sans_CJK_SC',serif]">
    <article className="flex h-full w-[792px] flex-col bg-white pr-[119px] pl-[119px] text-black shadow-[0_0_3px_rgba(80,100,110,0.5)]">
      <div className="ml-[49px]">
        <ChargingFigure />
      </div>
      <p className="mt-1.5 text-center text-[14px] leading-[27px]">图 5.6 正常充电状态</p>
      <p className="-mt-[3px] text-justify indent-8 text-[16px] leading-[27px]">
        当电压调成 15V 时，电流会过大，因此继电器会自动断开，显示屏显示异常数据因此结束充电。结束充电状态如图 5.7 所示。
      </p>
      <div className="mt-[7px] ml-[58px]">
        <StoppedFigure />
      </div>
      <p className="mt-2.5 text-center text-[14px] leading-[27px]">图 5.7 结束充电状态</p>
      <footer className="mt-auto -ml-6 flex h-[42px]">
        <div className="size-6 border-t border-r border-[#b0b0b0]" />
        <span className="flex-1 pt-4 text-center text-[12px] leading-4 text-[#777]">- 42 -</span>
      </footer>
    </article>
  </main>
);

const StatusDivider = () => <div className="mx-[13px] h-3.5 w-px bg-[#bccbd0]" />;

const StatusBar = () => (
  <footer className="flex h-[23px] shrink-0 items-center border-t border-[#bfcdd2] bg-[#dae7eb] pl-3.5 whitespace-nowrap">
    <span>页面: 46/80</span>
    <StatusDivider />
    <span>字数: 24804</span>
    <StatusDivider />
    <button type="button" className="flex items-center gap-1.5">
      拼写检查: 关闭
      <Chevron />
    </button>
    <button type="button" className="ml-[22px] flex items-center gap-[5px]">
      <Icon size={14} className="text-[#444]">
        <path d="M5 13.5H1.5V.5h10V5M4 4h5" />
        <g stroke="#2f5fd8">
          <circle cx="9" cy="9" r="2.8" />
          <path d="m11 11 2.5 2.5" />
        </g>
      </Icon>
      AI 校对
      <Chevron />
    </button>
    <div className="ml-[15px] h-3.5 w-px bg-[#bccbd0]" />
    <button type="button" className="ml-4 flex items-center gap-1.5">
      <svg width="12" height="12" viewBox="0 0 12 12" aria-hidden="true">
        <path d="M6 .5 12 11.5H0z" fill="#f5b955" />
        <path d="M6 4v4M6 9v1.5" stroke="#7a4b00" strokeWidth="1.3" />
      </svg>
      缺失字体
    </button>
    <StatusDivider />
    <span>兼容模式</span>
  </footer>
);

export default function App() {
  return (
    <div className="flex h-screen flex-col overflow-hidden bg-linear-to-b from-[#e6f1f1] via-[#e2eef0] to-[#d9e7eb] font-['Open_Sans','Noto_Sans_CJK_SC',sans-serif] text-[12px] leading-4 text-[#111]">
      <TitleTabs />
      <MenuBar />
      <Ribbon />
      <div className="flex min-h-0 flex-1">
        <Sidebar />
        <Document />
      </div>
      <StatusBar />
    </div>
  );
}
